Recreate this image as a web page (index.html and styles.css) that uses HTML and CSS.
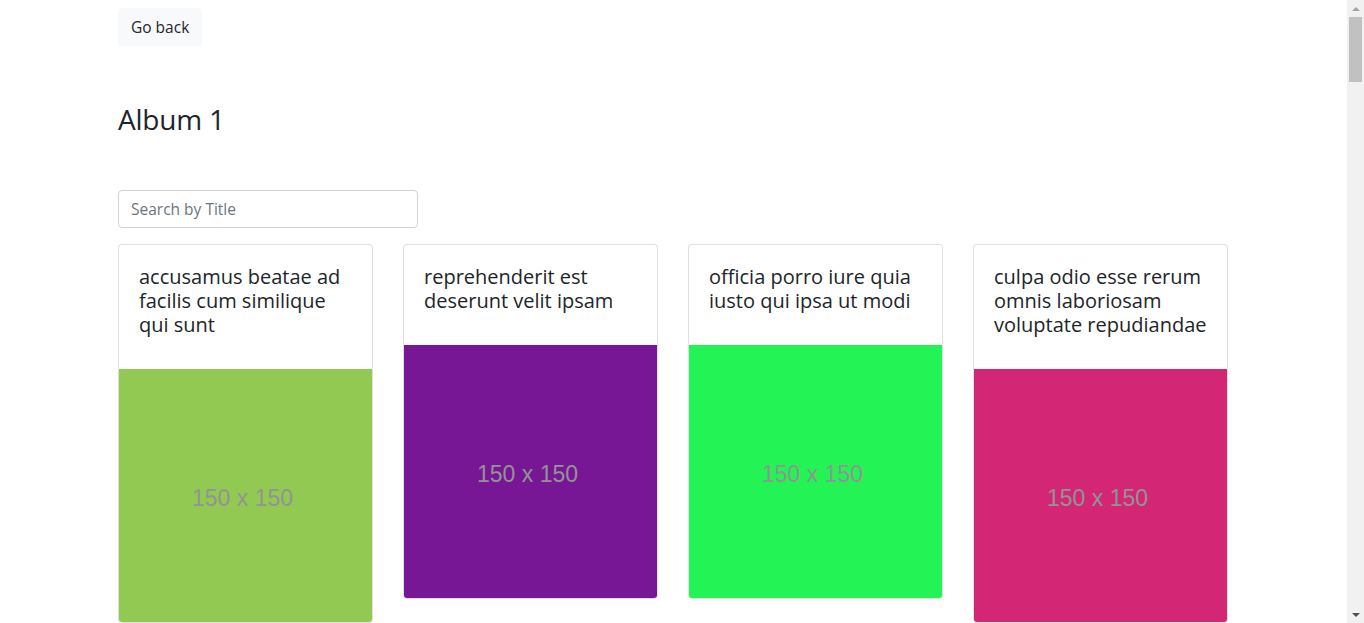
FILE: index.html
```html
<!DOCTYPE html>
<html lang="en">
<head>
<meta charset="utf-8">
<title>Album 1</title>
<link rel="stylesheet" href="styles.css">
</head>
<body>
<div class="container">
  <div class="top"><button class="btn">Go back</button></div>
  <h3 class="album-title">Album 1</h3>
  <form class="search"><input class="search-input" type="text" placeholder="Search by Title"></form>
  <div class="grid">
    <div class="card"><div class="card-body"><h5 class="card-title">accusamus beatae ad facilis cum similique qui sunt</h5></div><div class="thumb c1">150 x 150</div></div>
    <div class="card"><div class="card-body"><h5 class="card-title">reprehenderit est deserunt velit ipsam</h5></div><div class="thumb c2">150 x 150</div></div>
    <div class="card"><div class="card-body"><h5 class="card-title">officia porro iure quia iusto qui ipsa ut modi</h5></div><div class="thumb c3">150 x 150</div></div>
    <div class="card"><div class="card-body"><h5 class="card-title">culpa odio esse rerum omnis laboriosam voluptate repudiandae</h5></div><div class="thumb c4">150 x 150</div></div>
    <div class="card"><div class="card-body"><h5 class="card-title">natus nisi omnis corporis facere molestiae rerum in</h5></div><div class="thumb c5">150 x 150</div></div>
    <div class="card"><div class="card-body"><h5 class="card-title">accusamus ea aliquid et amet sequi nemo</h5></div><div class="thumb c6">150 x 150</div></div>
    <div class="card"><div class="card-body"><h5 class="card-title">officia delectus consequatur vero aut veniam explicabo molestias</h5></div><div class="thumb c7">150 x 150</div></div>
    <div class="card"><div class="card-body"><h5 class="card-title">aut porro officiis laborum odit ea laudantium corporis</h5></div><div class="thumb c8">150 x 150</div></div>
    <div class="card"><div class="card-body"><h5 class="card-title">qui eius qui autem sed</h5></div><div class="thumb c9">150 x 150</div></div>
    <div class="card"><div class="card-body"><h5 class="card-title">beatae et provident et ut vel</h5></div><div class="thumb c10">150 x 150</div></div>
    <div class="card"><div class="card-body"><h5 class="card-title">nihil at amet non hic quia qui</h5></div><div class="thumb c11">150 x 150</div></div>
    <div class="card"><div class="card-body"><h5 class="card-title">mollitia soluta ut rerum eos aliquam consequatur perspiciatis maiores</h5></div><div class="thumb c12">150 x 150</div></div>
    <div class="card"><div class="card-body"><h5 class="card-title">repudiandae iusto deleniti rerum</h5></div><div class="thumb c1">150 x 150</div></div>
    <div class="card"><div class="card-body"><h5 class="card-title">est necessitatibus architecto ut laborum</h5></div><div class="thumb c2">150 x 150</div></div>
    <div class="card"><div class="card-body"><h5 class="card-title">harum dicta similique quis dolore earum ex qui</h5></div><div class="thumb c3">150 x 150</div></div>
    <div class="card"><div class="card-body"><h5 class="card-title">iusto sunt nobis quasi veritatis quas expedita voluptatum deserunt</h5></div><div class="thumb c4">150 x 150</div></div>
    <div class="card"><div class="card-body"><h5 class="card-title">natus doloribus necessitatibus ipsa</h5></div><div class="thumb c5">150 x 150</div></div>
    <div class="card"><div class="card-body"><h5 class="card-title">laboriosam odit nam necessitatibus et illum dolores reiciendis</h5></div><div class="thumb c6">150 x 150</div></div>
    <div class="card"><div class="card-body"><h5 class="card-title">perferendis nesciunt eveniet et optio a</h5></div><div class="thumb c7">150 x 150</div></div>
    <div class="card"><div class="card-body"><h5 class="card-title">assumenda voluptatem laboriosam enim consequatur veniam placeat reiciendis error</h5></div><div class="thumb c8">150 x 150</div></div>
    <div class="card"><div class="card-body"><h5 class="card-title">ad et natus qui</h5></div><div class="thumb c9">150 x 150</div></div>
    <div class="card"><div class="card-body"><h5 class="card-title">et ea illo et sit voluptas animi blanditiis porro</h5></div><div class="thumb c10">150 x 150</div></div>
    <div class="card"><div class="card-body"><h5 class="card-title">harum velit vero totam</h5></div><div class="thumb c11">150 x 150</div></div>
    <div class="card"><div class="card-body"><h5 class="card-title">beatae officiis ut aut</h5></div><div class="thumb c12">150 x 150</div></div>
    <div class="card"><div class="card-body"><h5 class="card-title">facere non quis fuga fugit vitae</h5></div><div class="thumb c1">150 x 150</div></div>
    <div class="card"><div class="card-body"><h5 class="card-title">asperiores nobis voluptate qui</h5></div><div class="thumb c2">150 x 150</div></div>
    <div class="card"><div class="card-body"><h5 class="card-title">sit asperiores est quos quis nisi veniam error</h5></div><div class="thumb c3">150 x 150</div></div>
    <div class="card"><div class="card-body"><h5 class="card-title">non neque eligendi molestiae repudiandae illum voluptatem qui aut</h5></div><div class="thumb c4">150 x 150</div></div>
    <div class="card"><div class="card-body"><h5 class="card-title">aut ipsam quos ab placeat omnis</h5></div><div class="thumb c5">150 x 150</div></div>
    <div class="card"><div class="card-body"><h5 class="card-title">odio enim voluptatem quidem aut nihil illum</h5></div><div class="thumb c6">150 x 150</div></div>
    <div class="card"><div class="card-body"><h5 class="card-title">voluptate voluptates sequi</h5></div><div class="thumb c7">150 x 150</div></div>
    <div class="card"><div class="card-body"><h5 class="card-title">ad enim dignissimos voluptatem similique</h5></div><div class="thumb c8">150 x 150</div></div>
    <div class="card"><div class="card-body"><h5 class="card-title">culpa ipsam nobis qui fuga magni et mollitia</h5></div><div class="thumb c9">150 x 150</div></div>
    <div class="card"><div class="card-body"><h5 class="card-title">vitae est facere quia itaque adipisci perferendis id maiores</h5></div><div class="thumb c10">150 x 150</div></div>
    <div class="card"><div class="card-body"><h5 class="card-title">tenetur minus voluptatum et</h5></div><div class="thumb c11">150 x 150</div></div>
    <div class="card"><div class="card-body"><h5 class="card-title">expedita rerum eaque libero eius</h5></div><div class="thumb c12">150 x 150</div></div>
    <div class="card"><div class="card-body"><h5 class="card-title">totam voluptas iusto deserunt dolores</h5></div><div class="thumb c1">150 x 150</div></div>
    <div class="card"><div class="card-body"><h5 class="card-title">natus magnam iure rerum pariatur molestias dolore nisi</h5></div><div class="thumb c2">150 x 150</div></div>
    <div class="card"><div class="card-body"><h5 class="card-title">molestiae nam ullam et rerum doloribus</h5></div><div class="thumb c3">150 x 150</div></div>
    <div class="card"><div class="card-body"><h5 class="card-title">est quas voluptates dignissimos sint praesentium nisi recusandae</h5></div><div class="thumb c4">150 x 150</div></div>
    <div class="card"><div class="card-body"><h5 class="card-title">in voluptatem doloremque cum atque architecto deleniti</h5></div><div class="thumb c5">150 x 150</div></div>
    <div class="card"><div class="card-body"><h5 class="card-title">voluptatum totam vel voluptate omnis</h5></div><div class="thumb c6">150 x 150</div></div>
    <div class="card"><div class="card-body"><h5 class="card-title">omnis nulla eum aliquam distinctio</h5></div><div class="thumb c7">150 x 150</div></div>
    <div class="card"><div class="card-body"><h5 class="card-title">nobis et et sint</h5></div><div class="thumb c8">150 x 150</div></div>
    <div class="card"><div class="card-body"><h5 class="card-title">et id quia ex et pariatur</h5></div><div class="thumb c9">150 x 150</div></div>
    <div class="card"><div class="card-body"><h5 class="card-title">quis eius aut est</h5></div><div class="thumb c10">150 x 150</div></div>
    <div class="card"><div class="card-body"><h5 class="card-title">dolor ut rem consequatur</h5></div><div class="thumb c11">150 x 150</div></div>
    <div class="card"><div class="card-body"><h5 class="card-title">ut quo cumque</h5></div><div class="thumb c12">150 x 150</div></div>
    <div class="card"><div class="card-body"><h5 class="card-title">rerum aut nemo</h5></div><div class="thumb c1">150 x 150</div></div>
    <div class="card"><div class="card-body"><h5 class="card-title">et debitis quae</h5></div><div class="thumb c2">150 x 150</div></div>
  </div>
</div>
<div class="scrollbar" aria-hidden="true">
  <div class="sb-arrow sb-up"></div>
  <div class="sb-track"><div class="sb-thumb"></div></div>
  <div class="sb-arrow sb-down"></div>
</div>
</body>
</html>
```
FILE: styles.css
```css
* { box-sizing: border-box; }
html, body { margin: 0; }
body {
  font-family: "Open Sans", "Noto Sans", "Liberation Sans", sans-serif;
  font-size: 16px;
  line-height: 1.5;
  color: #212529;
  background: #fff;
  padding-right: 18px;
}
.container {
  max-width: 1140px;
  margin: 0 auto;
  padding: 0 15px 40px;
}
.top { padding-top: 8px; }
.btn {
  font-family: inherit;
  font-size: 15.5px;
  line-height: 24px;
  padding: 6px 12px;
  color: #212529;
  background: #f8f9fa;
  border: 1px solid #f8f9fa;
  border-radius: 4px;
  cursor: pointer;
}
.album-title {
  margin: 57px 0 0;
  font-size: 28px;
  font-weight: 500;
  line-height: 1.2;
  letter-spacing: -0.2px;
}
.search { margin-top: 53px; }
.search-input {
  width: 300px;
  height: 38px;
  padding: 6px 12px;
  font-family: inherit;
  font-size: 15.5px;
  color: #495057;
  border: 1px solid #ced4da;
  border-radius: 4px;
  outline: none;
}
.search-input::placeholder { color: #6c757d; }
.grid {
  margin-top: 16px;
  display: grid;
  grid-template-columns: repeat(4, 1fr);
  column-gap: 30px;
  row-gap: 30px;
  align-items: start;
}
.card {
  border: 1px solid rgba(0,0,0,.125);
  border-radius: 4px;
  background: #fff;
  overflow: hidden;
}
.card-body { padding: 20px; }
.card-title {
  margin: 0 0 12px;
  font-size: 20px;
  font-weight: 500;
  line-height: 24px;
}
.thumb {
  aspect-ratio: 1 / 1;
  display: flex;
  align-items: center;
  justify-content: center;
  padding: 6px 6px 0 0;
  font-family: "Liberation Sans", Arial, sans-serif;
  font-size: 23px;
  color: #939393;
}
.c1 { background: #92c952; }
.c2 { background: #771796; }
.c3 { background: #24f355; }
.c4 { background: #d32776; }
.c5 { background: #f66b97; }
.c6 { background: #56a8c2; }
.c7 { background: #b0f7cc; }
.c8 { background: #54176f; }
.c9 { background: #51aa97; }
.c10 { background: #810b14; }
.c11 { background: #1ee8a4; }
.c12 { background: #66b7d2; }

.scrollbar {
  position: fixed;
  top: 0;
  right: 0;
  bottom: 0;
  width: 17px;
  background: #f1f1f1;
  display: flex;
  flex-direction: column;
}
.sb-arrow {
  height: 17px;
  display: flex;
  align-items: center;
  justify-content: center;
}
.sb-up::before {
  content: "";
  border-left: 4px solid transparent;
  border-right: 4px solid transparent;
  border-bottom: 4px solid #a3a3a3;
}
.sb-down::before {
  content: "";
  border-left: 4px solid transparent;
  border-right: 4px solid transparent;
  border-top: 4px solid #505050;
}
.sb-track {
  flex: 1;
  padding: 0 2px;
}
.sb-thumb {
  height: 65px;
  background: #c1c1c1;
}
```
